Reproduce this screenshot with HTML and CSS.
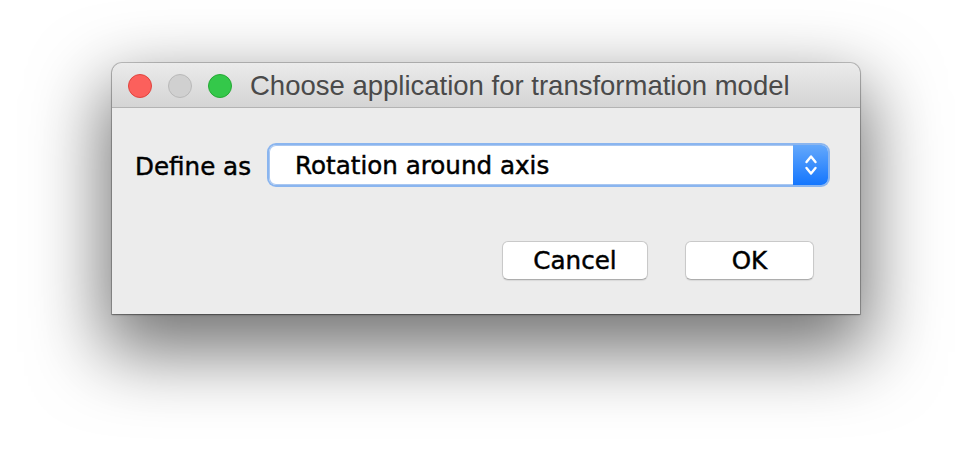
FILE: index.html
```html
<!DOCTYPE html>
<html lang="en">
<head>
<meta charset="utf-8">
<title>Choose application for transformation model</title>
<link rel="stylesheet" href="styles.css">
</head>
<body>
<div class="stage">
  <div class="window">
    <div class="titlebar">
      <div class="lights">
        <span class="light red"></span>
        <span class="light gray"></span>
        <span class="light green"></span>
      </div>
      <div class="title">Choose application for transformation model</div>
    </div>
    <div class="content">
      <div class="row">
        <label class="label">Define as</label>
        <div class="select">
          <span class="select-value">Rotation around axis</span>
          <span class="stepper">
            <svg width="18" height="30" viewBox="0 0 18 30">
              <path d="M4.5 12 L9 6.5 L13.5 12" fill="none" stroke="#fff" stroke-width="2.4" stroke-linecap="round" stroke-linejoin="round"/>
              <path d="M4.5 18 L9 23.5 L13.5 18" fill="none" stroke="#fff" stroke-width="2.4" stroke-linecap="round" stroke-linejoin="round"/>
            </svg>
          </span>
        </div>
      </div>
      <div class="buttons">
        <button class="btn">Cancel</button>
        <button class="btn">OK</button>
      </div>
    </div>
  </div>
</div>
</body>
</html>
```

FILE: styles.css
```css
html, body {
  margin: 0;
  padding: 0;
  background: #ffffff;
}

.stage {
  width: 972px;
  height: 474px;
  padding: 63px 0 0 112px;
  box-sizing: border-box;
  overflow: hidden;
}

.window {
  width: 748px;
  height: 251px;
  border-radius: 10px 10px 0 0;
  background: #ececec;
  box-shadow: 0 0 0 1px rgba(0,0,0,0.2), 0 1px 2px rgba(0,0,0,0.35), 0 30px 72px 8px rgba(0,0,0,0.55);
  display: flex;
  flex-direction: column;
  overflow: hidden;
}

.titlebar {
  height: 44px;
  flex: none;
  display: flex;
  align-items: center;
  background: linear-gradient(#ebebeb, #d4d4d4);
  border-bottom: 1px solid #b3b3b3;
  border-radius: 10px 10px 0 0;
}

.lights {
  display: flex;
  gap: 16px;
  padding-left: 16px;
  padding-top: 1px;
}

.light {
  width: 22px;
  height: 22px;
  border-radius: 50%;
  border: 1px solid;
}
.red { background: #fc605c; border-color: #e0443e; }
.gray { background: #d0d0d0; border-color: #b9b9b9; }
.green { background: #34c84a; border-color: #25a934; }

.title {
  margin-left: 18px;
  font-family: "Liberation Sans", Arial, sans-serif;
  font-size: 27.5px;
  color: #4a4a4a;
  white-space: nowrap;
  padding-top: 1px;
}

.content {
  flex: 1;
  display: flex;
  flex-direction: column;
  padding: 37px 32px 0 23px;
  font-family: "DejaVu Sans", sans-serif;
  font-size: 24.6px;
  color: #000;
  -webkit-text-stroke: 0.45px #000;
}

.row {
  display: flex;
  align-items: center;
  height: 40px;
}

.label {
  width: 134px;
  flex: none;
  padding-top: 2px;
}

.select {
  flex: 1;
  height: 40px;
  box-sizing: border-box;
  border-radius: 7px;
  background: #fff;
  box-shadow: 0 0 0 2px #8ab5ef, inset 0 0 0 1px #a9c7f1;
  display: flex;
  align-items: stretch;
  overflow: hidden;
}

.select-value {
  flex: 1;
  display: flex;
  align-items: center;
  padding-left: 26px;
}

.stepper {
  width: 35px;
  flex: none;
  display: flex;
  align-items: center;
  justify-content: center;
  background: linear-gradient(#64a8fb, #1476fe);
}

.buttons {
  display: flex;
  justify-content: flex-end;
  gap: 37px;
  margin-top: 56px;
  padding-right: 14px;
}

.btn {
  font-family: "DejaVu Sans", sans-serif;
  font-size: 24.6px;
  color: #000;
  -webkit-text-stroke: 0.45px #000;
  background: #fff;
  border: 1px solid #c9c9c9;
  border-bottom-color: #adadad;
  border-radius: 6px;
  height: 39px;
  padding: 0;
  box-shadow: 0 1px 1px rgba(0,0,0,0.08);
}
.btn:first-child { width: 146px; }
.btn:last-child { width: 129px; }
```
